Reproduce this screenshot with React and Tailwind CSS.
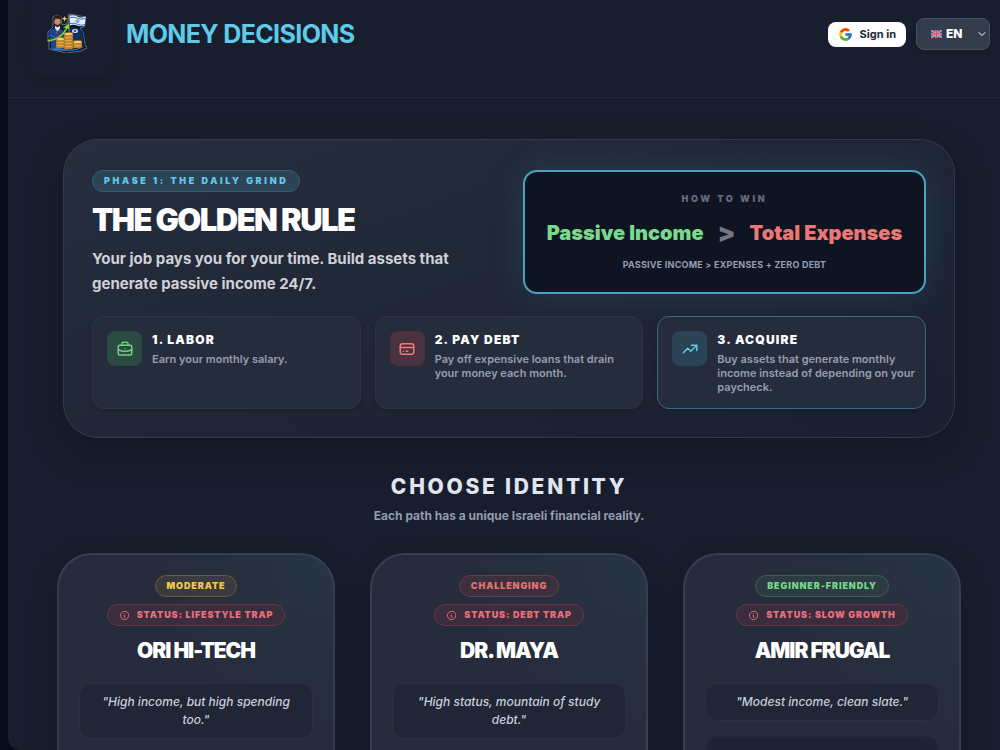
import { useState } from 'react';
import { FcGoogle } from 'react-icons/fc';
import { TbBriefcase, TbCreditCard, TbInfoCircle, TbTrendingUp } from 'react-icons/tb';
import { ChevronDown } from 'lucide-react';

const steps = [
  {
    id: 'labor',
    title: '1. LABOR',
    text: 'Earn your monthly salary.',
    icon: TbBriefcase,
    iconStyle: 'bg-[#2b4a42] text-[#6fd184]',
    border: 'border-[#2d3544]',
  },
  {
    id: 'debt',
    title: '2. PAY DEBT',
    text: 'Pay off expensive loans that drain your money each month.',
    icon: TbCreditCard,
    iconStyle: 'bg-[#4a323f] text-[#ee7b79]',
    border: 'border-[#2d3544]',
  },
  {
    id: 'acquire',
    title: '3. ACQUIRE',
    text: 'Buy assets that generate monthly income instead of depending on your paycheck.',
    icon: TbTrendingUp,
    iconStyle: 'bg-[#2b4557] text-[#5cc8e6]',
    border: 'border-[#376c80]',
  },
];

const identities = [
  {
    name: 'ORI HI-TECH',
    level: 'MODERATE',
    levelStyle: 'bg-[#3b3b3f] border-[#665a38] text-[#f0cb44]',
    status: 'STATUS: LIFESTYLE TRAP',
    quote: '"High income, but high spending too."',
  },
  {
    name: 'DR. MAYA',
    level: 'CHALLENGING',
    levelStyle: 'bg-[#3c303d] border-[#663c45] text-[#e57373]',
    status: 'STATUS: DEBT TRAP',
    quote: '"High status, mountain of study debt."',
  },
  {
    name: 'AMIR FRUGAL',
    level: 'BEGINNER-FRIENDLY',
    levelStyle: 'bg-[#2c3c42] border-[#386349] text-[#74d98a]',
    status: 'STATUS: SLOW GROWTH',
    quote: '"Modest income, clean slate."',
  },
];

const Coins = ({ x, top, count }) => (
  <g stroke="#8a5312" strokeWidth="0.5">
    {Array.from({ length: count }, (_, i) => count - 1 - i).map((i) => (
      <g key={i}>
        <rect x={x} y={top + i * 3} width="9" height="3" rx="1.3" fill="#d99425" />
        <ellipse cx={x + 4.5} cy={top + i * 3} rx="4.5" ry="1.4" fill="#ffdc7a" />
      </g>
    ))}
  </g>
);

const Logo = () => (
  <svg viewBox="0 0 40 38" className="w-10 h-10" aria-hidden="true">
    <path d="M2 35V28L1 25V18L6 13V3L10 1l4 2 1 8 5-1 2-10 17 3-2 10-4 1 3 5 2 11 2 4-6 3-15 2z" fill="#0d1832" stroke="#8ea2b8" strokeWidth="0.6" />
    <path d="M4 34V26L1.500 22l1-5 5-3h5l5 4v8l-3 8z" fill="#1c4490" />
    <path d="M8 14l2.500 4 2.500-4v-3H8z" fill="#e9eef5" />
    <path d="M10 15l1 4-1 2-1-2z" fill="#b33232" />
    <ellipse cx="10.500" cy="7.500" rx="3.200" ry="4.200" fill="#c98a62" />
    <path d="M6.500 7C6 3 8 1.200 11 1.500c3 .2 4 2 3.200 5.500l-1-2-5-.5-.8 2z" fill="#2b1c19" />
    <path d="M7.500 9.500q3 2.500 6 0l-.5 2.500-2.500 1.500-2.500-1.500z" fill="#4a2e23" />
    <path d="M2.500 19l6 3 7-3v3l-7 3-6-3z" fill="#265bb5" stroke="#0d2555" strokeWidth="0.5" />
    <path d="M17.500 2l.8 2 2 .8-2 .8-.8 2-.8-2-2-.8 2-.8z" fill="#e8cf6c" />
    <path d="M22 15c7-4 13-1 14 8v10H20V20z" fill="#11305f" stroke="#071638" strokeWidth="0.8" />
    <ellipse cx="28" cy="17" rx="3" ry="2" fill="#c6d7e9" />
    <circle cx="28" cy="17" r="1" fill="#10254a" />
    <path d="M22 1v18" stroke="#8793a5" strokeWidth="0.8" />
    <path d="M22.500 1.500q5-1 8 1t8 0l-.5 9q-4 1.500-8 0t-7 0z" fill="#e6edf7" />
    <path d="M23 3.500q4-1 7.500.8t7.500.2M23 9.500q4-1 7.500.8t7.500.2" fill="none" stroke="#3e73c5" strokeWidth="1" />
    <path d="M30.500 5.300l1.600 2.700h-3.200zm0 3.700l-1.600-2.700h3.200z" fill="none" stroke="#3e73c5" strokeWidth="0.500" />
    <path d="M0 26q13-1 19-12l-3 0 6-5 .5 7-2-1.500Q15 26 1 28z" fill="#93d834" stroke="#2c6c23" strokeWidth="0.500" />
    <Coins x={9} top={25} count={3} />
    <Coins x={26} top={28} count={2} />
    <Coins x={17} top={20} count={5} />
    <path d="M2 35q8-2 16 0t20-3q-6 5-19 5-9 0-17-2z" fill="#3277bb" />
  </svg>
);

const Flag = () => (
  <svg viewBox="0 0 22 16" className="w-[11px] h-2" aria-hidden="true">
    <path fill="#3c4a85" d="M0 0h22v16H0z" />
    <path stroke="#d9cfe0" strokeWidth="3" d="M0 0l22 16M22 0L0 16" />
    <path stroke="#d74d64" strokeWidth="1.500" d="M0 0l22 16M22 0L0 16" />
    <path stroke="#d9cfe0" strokeWidth="4.500" d="M11 0v16M0 8h22" />
    <path stroke="#d74d64" strokeWidth="3" d="M11 0v16M0 8h22" />
  </svg>
);

const Header = () => {
  const [language, setLanguage] = useState('en');

  return (
    <header className="h-[98px] flex items-start justify-between pl-5 pr-[10px] border-b border-[#222a3a]">
      <div className="flex items-start">
        <div className="w-[84px] h-[76px] rounded-b-2xl flex justify-center pt-[13px] pr-1.5 shadow-[0_5px_10px_rgba(10,12,25,0.08)]">
          <Logo />
        </div>
        <h1 className="ml-[14px] mt-[18px] text-[25px] leading-8 font-bold tracking-tight text-[#5fcbe8]">MONEY DECISIONS</h1>
      </div>
      <div className="flex items-center gap-x-[10px] mt-[18px]">
        <button className="h-[25px] px-[10px] bg-white rounded-lg flex items-center gap-x-[7px] text-[11px] font-bold text-[#202938]">
          <FcGoogle className="w-[15px] h-[15px]" />
          Sign in
        </button>
        <div className="relative">
          <select
            aria-label="Language"
            value={language}
            onChange={(e) => setLanguage(e.target.value)}
            className="appearance-none w-[74px] h-8 pl-[29px] rounded-lg border border-[#485161] bg-[#333c4b] text-xs leading-5 font-extrabold text-white shadow-md"
          >
            <option value="en">EN</option>
            <option value="he">HE</option>
          </select>
          <span className="absolute left-[15px] top-3 pointer-events-none"><Flag /></span>
          <ChevronDown className="absolute right-0.5 top-[10px] w-3 h-3 text-white pointer-events-none" />
        </div>
      </div>
    </header>
  );
};

const GoldenRule = () => (
  <section className="rounded-[35px] border border-[#333b4a] bg-linear-[160deg,#262d3c,#202737_45%,#1a2030] p-7 shadow-[0_14px_34px_rgba(16,14,28,0.45)]">
    <div className="grid grid-cols-2 gap-7 items-center">
      <div className="pt-0.5">
        <div className="w-fit flex items-center h-[22px] px-[11px] rounded-full border border-[#306172] bg-[#2c4456] text-[9px] font-black tracking-[0.3em] text-[#5fcbe8]">
          PHASE 1: THE DAILY GRIND
        </div>
        <h2 className="mt-3 text-[31px] leading-8 font-black tracking-tighter text-white">THE GOLDEN RULE</h2>
        <p className="mt-[10px] text-[15px] leading-[25px] font-bold text-[#cfd1d6]">
          Your job pays you for your time. Build assets that generate passive income 24/7.
        </p>
      </div>
      <div className="h-[124px] flex flex-col items-center rounded-[14px] border-2 border-[#4ba3bd] bg-[#0e1422] pt-[21px] shadow-[0_0_36px_rgba(60,160,190,0.18)]">
        <p className="text-[9px] leading-3 font-black tracking-[0.3em] text-[#636b7e]">HOW TO WIN</p>
        <p className="mt-3 flex items-center gap-x-[14px] text-xl leading-8 font-black whitespace-nowrap">
          <span className="text-[#79da8b]">Passive Income</span>
          <span className="text-[26px] text-[#74777f]">&gt;</span>
          <span className="text-[#ec7774]">Total Expenses</span>
        </p>
        <p className="mt-[10px] text-[9px] leading-3 font-bold tracking-wide text-[#969eb0]">PASSIVE INCOME &gt; EXPENSES + ZERO DEBT</p>
      </div>
    </div>

    <div className="mt-5 grid grid-cols-3 gap-[14px]">
      {steps.map((step) => (
        <div key={step.id} className={`flex items-start gap-x-[10px] py-[14px] pl-[14px] pr-2 rounded-xl border bg-[#252c3b] shadow-md ${step.border}`}>
          <div className={`w-[35px] h-[35px] shrink-0 rounded-lg flex items-center justify-center ${step.iconStyle}`}>
            <step.icon className="w-[18px] h-[18px]" />
          </div>
          <div>
            <h3 className="text-xs leading-[17px] font-black tracking-widest text-white">{step.title}</h3>
            <p className="mt-1 text-[11px] leading-[14px] font-semibold text-[#959eb0]">{step.text}</p>
          </div>
        </div>
      ))}
    </div>
  </section>
);

const IdentityCard = ({ identity }) => (
  <article className="min-h-[420px] rounded-[35px] border-2 border-[#353f4f] bg-[#262c3b] bg-radial-[circle_at_top_right] from-[#283545] to-[#262c3b] to-35% p-5 flex flex-col items-center shadow-[0_10px_28px_rgba(14,14,26,0.3)]">
    <span className={`h-[22px] px-[11px] flex items-center rounded-full border text-[9px] font-black tracking-widest ${identity.levelStyle}`}>
      {identity.level}
    </span>
    <span className="mt-[7px] h-[22px] px-[11px] flex items-center gap-x-[7px] rounded-full border border-[#673747] bg-[#3a2d3d] text-[9px] font-black tracking-widest text-[#e9717f]">
      <TbInfoCircle className="w-[11px] h-[11px]" />
      {identity.status}
    </span>
    <h3 className="mt-[9px] text-[21px] leading-8 font-black tracking-tighter text-white">{identity.name}</h3>
    <p className="mt-4 w-full rounded-xl border border-[#2a3140] bg-[#202635] px-4 py-[9px] text-center text-xs leading-[18px] font-medium italic text-[#c8cedb]">
      {identity.quote}
    </p>
    <div className="mt-[15px] w-full h-28 rounded-xl border border-[#222938] bg-[#1e2433]" />
  </article>
);

export default function App() {
  return (
    <div className="h-screen pl-2 bg-[#080c19] font-[Inter,sans-serif]">
      <div className="h-full overflow-y-auto [scrollbar-width:none] rounded-bl-xl bg-[#181e2d]">
        <Header />
        <main>
          <div className="pt-[41px] pl-[55px] pr-[45px]">
            <GoldenRule />
          </div>
          <section className="pt-[33px] pl-[49px] pr-[39px] pb-10">
            <div className="text-center">
              <h2 className="text-[21px] leading-8 font-extrabold tracking-[0.13em] text-[#e0e5ee]">CHOOSE IDENTITY</h2>
              <p className="mt-[3px] text-xs leading-5 font-bold text-[#939caf]">Each path has a unique Israeli financial reality.</p>
            </div>
            <div className="mt-[27px] grid grid-cols-3 gap-[35px] items-start">
              {identities.map((identity) => (
                <IdentityCard key={identity.name} identity={identity} />
              ))}
            </div>
          </section>
        </main>
      </div>
    </div>
  );
}
